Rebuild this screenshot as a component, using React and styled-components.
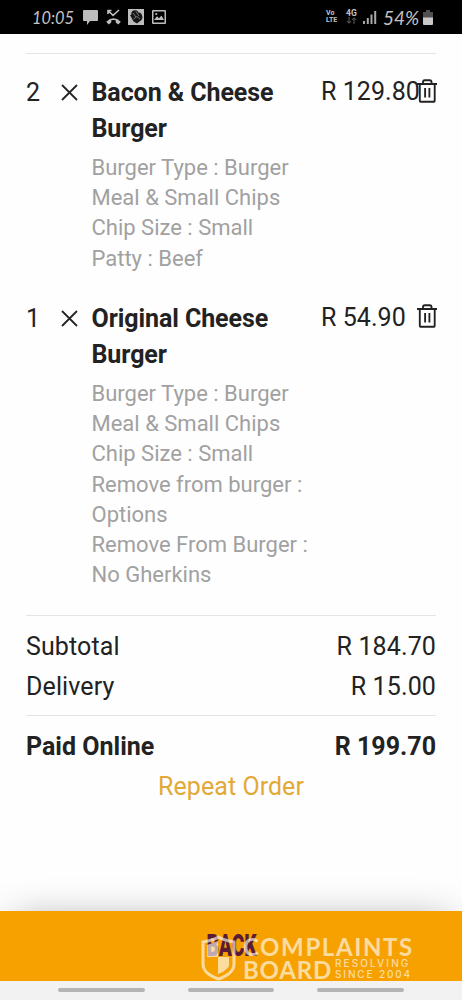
import React from 'react';
import styled, { createGlobalStyle } from 'styled-components';

const GlobalStyle = createGlobalStyle`
  * { box-sizing: border-box; }
  body { margin: 0; background: #fefefe; font-family: Roboto, "Liberation Sans", sans-serif; color: #222; }
  svg { display: block; flex: none; }
`;

const Screen = styled.div`
  width: 462px;
  height: 1000px;
  display: flex;
  flex-direction: column;
  overflow: hidden;
`;

const StatusBar = styled.header`
  height: 34px;
  flex: none;
  background: #000;
  color: #c4c4c4;
  display: flex;
  justify-content: space-between;
  padding: 0 29px 0 32px;
`;

const StatusGroup = styled.div`
  display: flex;
  align-items: center;
  height: 34px;
`;

const Clock = styled.span`
  width: 51px;
  font: italic 400 17px/35px Lato, sans-serif;
  white-space: nowrap;
  transform: scaleX(0.96);
  transform-origin: left;
`;

const Percent = styled.span`
  width: 40px;
  font: italic 400 20px/34px Lato, sans-serif;
  white-space: nowrap;
  transform: scaleX(0.95);
  transform-origin: left;
`;

const Network = styled.span`
  display: flex;
  flex-direction: column;
  width: ${(p) => p.$width}px;
  font-size: ${(p) => p.$size}px;
  line-height: 7px;
  font-weight: 700;
`;

const Order = styled.main`
  flex: 1;
  padding: 19px 26px 0;
`;

const Rule = styled.hr`
  height: 1px;
  border: 0;
  margin: 0;
  background: #e4e4e4;
`;

const Items = styled.section`
  padding-top: 21px;
  display: flex;
  flex-direction: column;
  gap: 26px;
  height: 561px;
`;

const Item = styled.article`
  display: grid;
  grid-template-columns: 35px 30.5px 229.5px 95.5px 22px;
`;

const Quantity = styled.span`
  font-size: 25px;
  line-height: 36px;
`;

const IconCell = styled.span`
  padding-top: ${(p) => p.$top}px;
`;

const Price = styled.span`
  font-size: 25px;
  line-height: 33px;
  letter-spacing: 0.05px;
  white-space: nowrap;
`;

const Name = styled.h2`
  margin: 0 0 6px;
  max-width: 215px;
  font-size: 25px;
  font-weight: 700;
  line-height: 36px;
  letter-spacing: -0.08px;
`;

const Option = styled.p`
  margin: 0 0 1px;
  max-width: 222px;
  font-size: 22px;
  line-height: 29.7px;
  color: #a1a1a1;
`;

const Totals = styled.section`
  padding: 11px 0 8px;
`;

const TotalRow = styled.div`
  display: flex;
  justify-content: space-between;
  font-size: 25px;
  line-height: 40px;
  letter-spacing: ${(p) => (p.$bold ? 0 : 0.12)}px;
  font-weight: ${(p) => (p.$bold ? 700 : 400)};
`;

const RepeatButton = styled.button`
  display: block;
  width: 100%;
  padding: 0;
  border: 0;
  background: none;
  font: 400 25px/40px Roboto, sans-serif;
  letter-spacing: 0.06px;
  color: #e3a936;
`;

const BackBar = styled.footer`
  position: relative;
  flex: none;
  height: 70px;
  background: #f6a100;
  display: flex;
  justify-content: center;
  align-items: center;
  box-shadow: 0 -2px 42px -14px rgba(0, 0, 0, 0.42);
`;

const BackLabel = styled.span`
  font: 900 31px/30px Roboto, sans-serif;
  color: #5b1a35;
  transform: scaleX(0.62);
`;

const Watermark = styled.div`
  position: absolute;
  left: 201px;
  top: 24px;
  display: flex;
  color: #fff;
  opacity: 0.62;
`;

const WatermarkText = styled.div`
  width: 172px;
  margin-left: 7px;
  font-family: Lato, sans-serif;
  font-weight: 700;
`;

const Brand = styled.div`
  font-size: 24px;
  line-height: 23px;
  letter-spacing: ${(p) => p.$spacing}px;
  white-space: nowrap;
`;

const BrandRow = styled.div`
  display: flex;
  gap: 3px;
`;

const Tagline = styled.div`
  font: 500 10px/11px Inter, sans-serif;
  letter-spacing: ${(p) => p.$spacing}px;
  white-space: nowrap;
`;

const NavBar = styled.nav`
  position: relative;
  flex: none;
  height: 19px;
  background: #f2f2f2;
  display: flex;
  justify-content: center;
  gap: 43px;
  padding-top: 7px;
`;

const NavHandle = styled.span`
  width: 86.5px;
  height: 4px;
  border-radius: 2px;
  background: #b4b4b4;
`;

const TimesIcon = () => (
  <svg width="17" height="17" viewBox="0 0 17 17" stroke="#252525" strokeWidth="1.8">
    <path d="M1 1l15 15M16 1L1 16" />
  </svg>
);

const TrashIcon = () => (
  <svg width="20.5" height="24" viewBox="0 0 22 24" preserveAspectRatio="none" fill="none" stroke="#222" strokeWidth="2">
    <path d="M0 5H22M3 5V21.2Q3 22.8 4.6 22.8H17.4Q19 22.8 19 21.2V5M6.4 4.6V3.2Q6.4 1.2 8.4 1.2H13.6Q15.6 1.2 15.6 3.2V4.6M8.7 9V18.5M13.3 9V18.5" />
  </svg>
);

const NotificationIcons = () => (
  <svg width="84" height="18" viewBox="0 0 84 18" fill="#bdbdbd">
    <path d="M1 2H14Q15 2 15 3V12Q15 13 14 13H7L4 17V13H1Q0 13 0 12V3Q0 2 1 2Z" />
    <path d="M23.2 13.7Q30.5 6.8 37.8 13.7L35.3 16.5L32.7 14.5V12.3Q30.5 11.6 28.3 12.3V14.5L25.7 16.5Z" />
    <path d="M25 6V2.5H28.5M25.3 2.8L30 7.4L36 2" fill="none" stroke="#bdbdbd" strokeWidth="1.6" />
    <rect x="45" y="1" width="16" height="16" />
    <g fill="#171717">
      <circle cx="52" cy="6" r="3.7" />
      <path d="M47 7L57 4.5Q61 8 58.5 12L54 15.5L50.5 13.5Z" />
    </g>
    <path d="M50 5L53 9M53 3.5L56 8M50.5 11L54 8.5L57 11" fill="none" stroke="#8b8b8b" strokeWidth=".8" />
    <path fillRule="evenodd" d="M70 2H82Q83 2 83 3V15Q83 16 82 16H70Q69 16 69 15V3Q69 2 70 2ZM70.5 3.5V14.5H81.5V3.5Z" />
    <path d="M71 12L74 8.3L76 10.3L78.5 7.5L81 12Z" />
    <circle cx="73.3" cy="6" r="1.1" />
  </svg>
);

const DataArrows = () => (
  <svg width="11" height="7" viewBox="0 0 11 7" fill="none" stroke="#626262">
    <path d="M3 0V6M.8 4L3 6.2L5.2 4M8 7V1M5.8 3L8 .8L10.2 3" />
  </svg>
);

const SignalIcon = () => (
  <svg width="20" height="14" viewBox="0 0 20 14" fill="#a8a8a8">
    <path d="M0 11h2v3H0zM3.8 8h2v6h-2zM7.5 4.5h2V14h-2zM11.2 1h2v13h-2z" />
  </svg>
);

const BatteryIcon = () => (
  <svg width="10" height="15" viewBox="0 0 10 15">
    <path d="M3 0H7V2H10V8H0V2H3Z" fill="#505050" />
    <path d="M0 7.5H10V14Q10 15 9 15H1Q0 15 0 14Z" fill="#c8c8c8" />
  </svg>
);

const ShieldIcon = () => (
  <svg width="35" height="46" viewBox="0 0 35 46">
    <path d="M6 10L17 6V22H6ZM17 22H28V31Q25 36 17 39Z" fill="#fff" />
    <path d="M17.5 2C13 5 7 6 2 7V29C2 37 9 41 17.5 44C26 41 33 37 33 29V7C28 6 22 5 17.5 2Z" fill="none" stroke="#fff" strokeWidth="3" />
  </svg>
);

const items = [
  {
    quantity: 2,
    name: 'Bacon & Cheese Burger',
    price: 'R 129.80',
    options: ['Burger Type : Burger Meal & Small Chips', 'Chip Size : Small', 'Patty : Beef'],
  },
  {
    quantity: 1,
    name: 'Original Cheese Burger',
    price: 'R 54.90',
    options: [
      'Burger Type : Burger Meal & Small Chips',
      'Chip Size : Small',
      'Remove from burger : Options',
      'Remove From Burger : No Gherkins',
    ],
  },
];

export default function App() {
  return (
    <Screen>
      <GlobalStyle />
      <StatusBar>
        <StatusGroup>
          <Clock>10:05</Clock>
          <NotificationIcons />
        </StatusGroup>
        <StatusGroup>
          <Network $width={20} $size={7}>
            <span>Vo</span>
            <span>LTE</span>
          </Network>
          <Network $width={17} $size={8.5}>
            <span>4G</span>
            <DataArrows />
          </Network>
          <SignalIcon />
          <Percent>54%</Percent>
          <BatteryIcon />
        </StatusGroup>
      </StatusBar>
      <Order>
        <Rule />
        <Items>
          {items.map((item) => (
            <Item key={item.name}>
              <Quantity>{item.quantity}</Quantity>
              <IconCell $top={9}><TimesIcon /></IconCell>
              <div>
                <Name>{item.name}</Name>
                {item.options.map((option) => <Option key={option}>{option}</Option>)}
              </div>
              <Price>{item.price}</Price>
              <IconCell $top={3.5}><TrashIcon /></IconCell>
            </Item>
          ))}
        </Items>
        <Rule />
        <Totals>
          <TotalRow><span>Subtotal</span><span>R 184.70</span></TotalRow>
          <TotalRow><span>Delivery</span><span>R 15.00</span></TotalRow>
        </Totals>
        <Rule />
        <Totals>
          <TotalRow $bold><span>Paid Online</span><span>R 199.70</span></TotalRow>
          <RepeatButton>Repeat Order</RepeatButton>
        </Totals>
      </Order>
      <BackBar>
        <BackLabel>BACK</BackLabel>
        <Watermark>
          <ShieldIcon />
          <WatermarkText>
            <Brand $spacing={1.6}>COMPLAINTS</Brand>
            <BrandRow>
              <Brand $spacing={0.8}>BOARD</Brand>
              <div>
                <Tagline $spacing={2.1}>RESOLVING</Tagline>
                <Tagline $spacing={1.85}>SINCE 2004</Tagline>
              </div>
            </BrandRow>
          </WatermarkText>
        </Watermark>
      </BackBar>
      <NavBar>
        <NavHandle />
        <NavHandle />
        <NavHandle />
      </NavBar>
    </Screen>
  );
}
